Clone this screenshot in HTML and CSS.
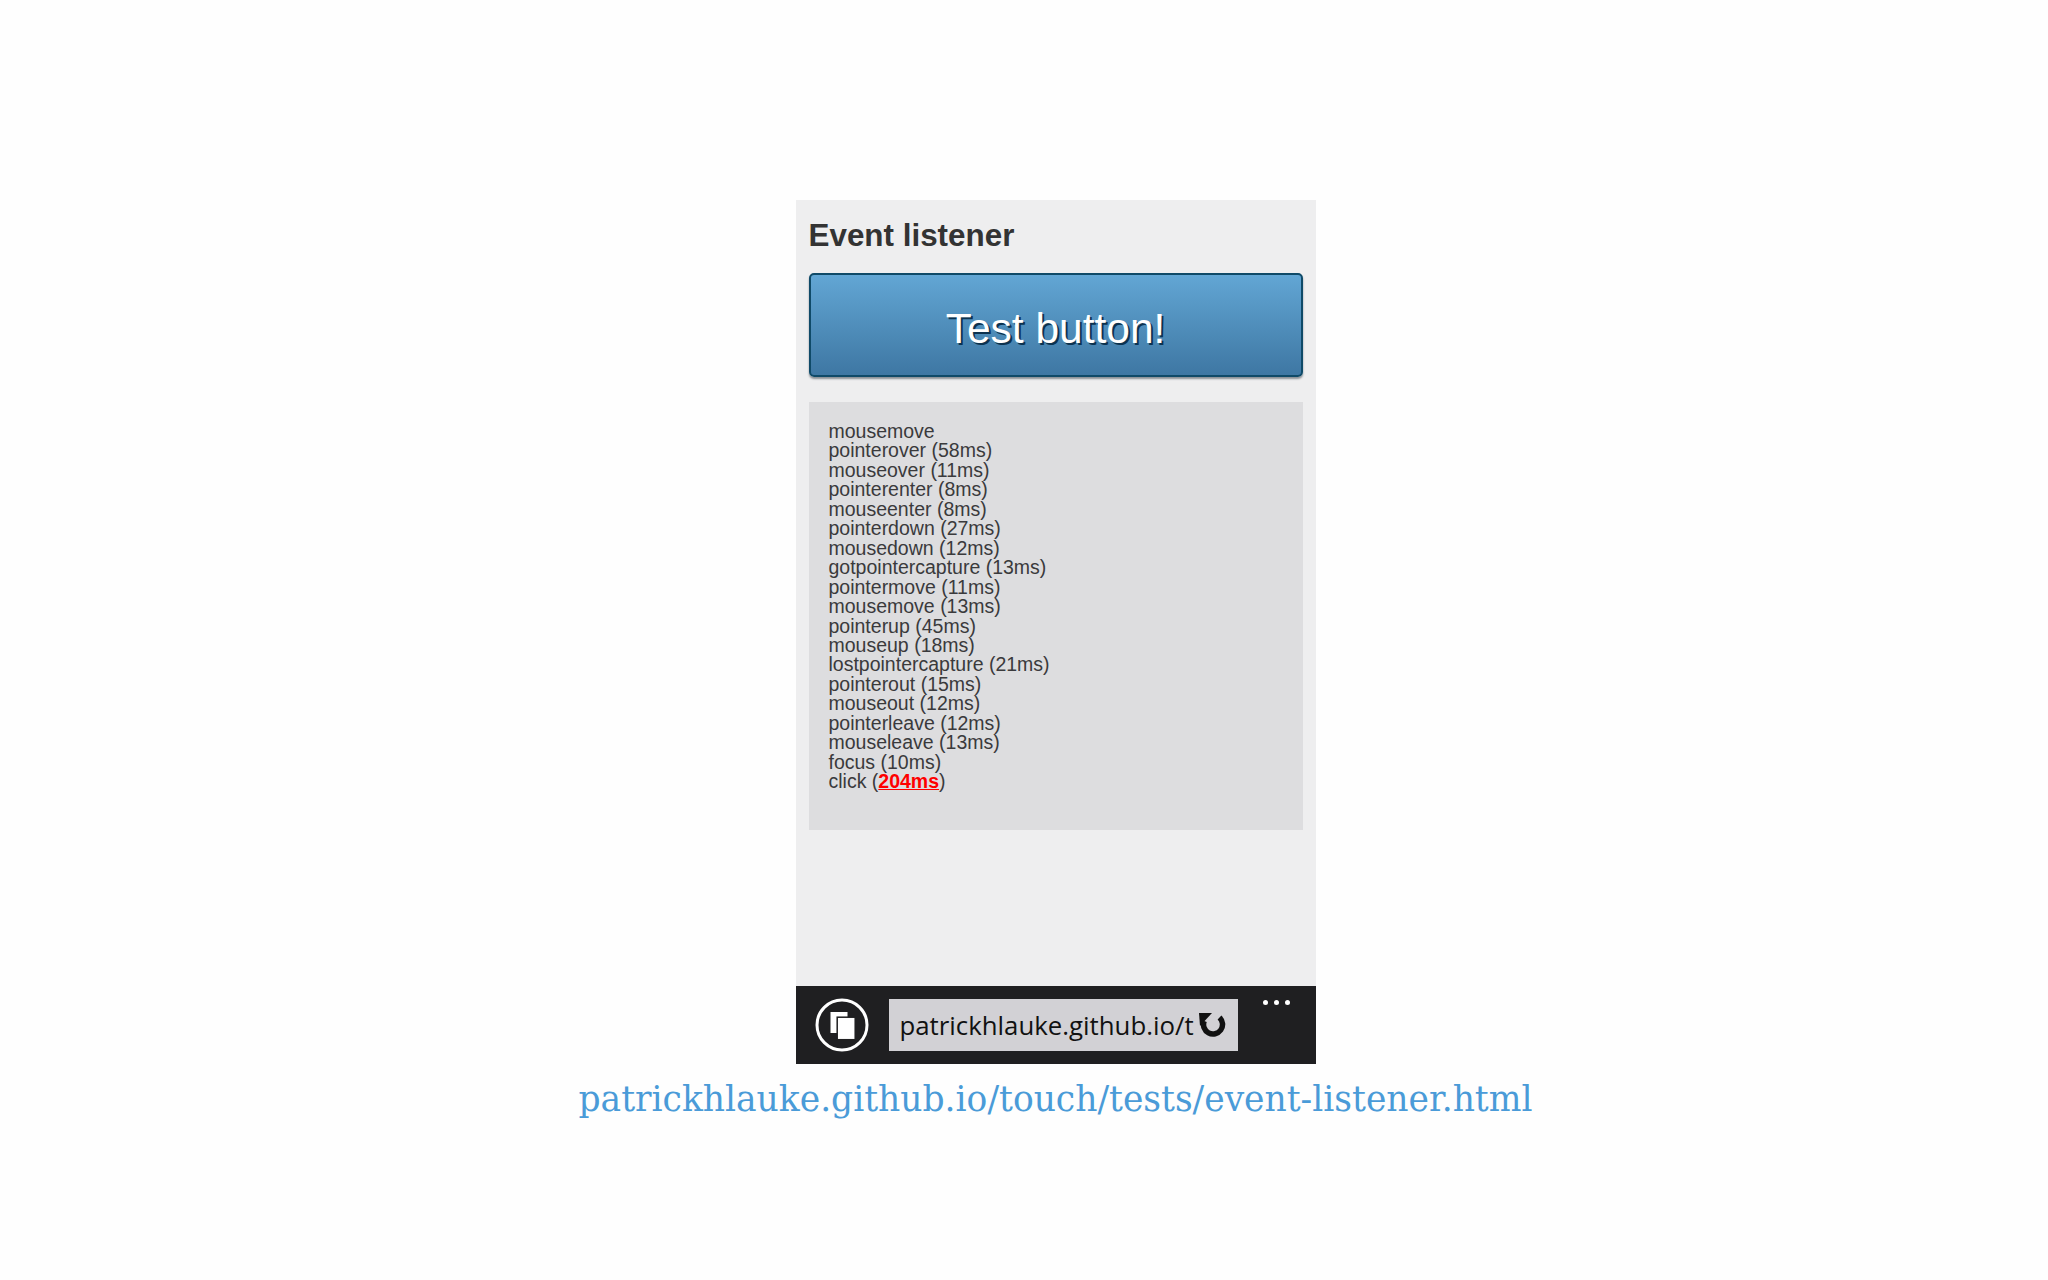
FILE: index.html
```html
<!DOCTYPE html>
<html lang="en">
<head>
    <meta charset="UTF-8">
    <title>Event listener</title>
    <link rel="stylesheet" href="styles.css">
</head>
<body>
    <main class="slide">
        <div class="phone">
            <div class="screen">
                <h1>Event listener</h1>
                <button class="test-button">Test button!</button>
                <div class="log">
                    mousemove<br>
                    pointerover (58ms)<br>
                    mouseover (11ms)<br>
                    pointerenter (8ms)<br>
                    mouseenter (8ms)<br>
                    pointerdown (27ms)<br>
                    mousedown (12ms)<br>
                    gotpointercapture (13ms)<br>
                    pointermove (11ms)<br>
                    mousemove (13ms)<br>
                    pointerup (45ms)<br>
                    mouseup (18ms)<br>
                    lostpointercapture (21ms)<br>
                    pointerout (15ms)<br>
                    mouseout (12ms)<br>
                    pointerleave (12ms)<br>
                    mouseleave (13ms)<br>
                    focus (10ms)<br>
                    click (<strong>204ms</strong>)
                </div>
            </div>
            <div class="toolbar">
                <svg class="tabs-icon" viewBox="0 0 54 54" width="54" height="54">
                    <circle cx="27" cy="27" r="25" fill="none" stroke="#fff" stroke-width="3"/>
                    <rect x="15.5" y="14" width="17" height="21" fill="#fff"/>
                    <rect x="22.2" y="19.2" width="18" height="22.5" fill="#fff" stroke="#1f1f21" stroke-width="1.5"/>
                </svg>
                <div class="address">
                    <span class="url">patrickhlauke.github.io/t</span>
                    <svg class="reload" viewBox="0 0 28 28" width="28" height="28">
                        <path d="M21.5 6.5A9.5 9.5 0 1 1 6.2 10" fill="none" stroke="#111" stroke-width="5.5"/>
                        <path d="M1 2h13L2 15z" fill="#111"/>
                    </svg>
                </div>
                <div class="dots"><i></i><i></i><i></i></div>
            </div>
        </div>
        <a class="caption" href="#">patrickhlauke.github.io/touch/tests/event-listener.html</a>
    </main>
</body>
</html>
```

FILE: styles.css
```css
body {
    margin: 0;
    background-color: #fefefe;
    font-family: "Liberation Sans", Arial, sans-serif;
}
.slide {
    display: flex;
    flex-direction: column;
    align-items: center;
    padding: 200px 0 0 63px;
}
.phone {
    width: 520px;
    display: flex;
    flex-direction: column;
}
.screen {
    height: 786px;
    box-sizing: border-box;
    padding: 17px 13px 0;
    background-color: #eeeeef;
}
h1 {
    margin: 0 0 18px;
    font-size: 31.4px;
    line-height: 38px;
    font-weight: bold;
    color: #333;
}
.test-button {
    display: block;
    width: 100%;
    height: 104px;
    padding: 7px 0 0;
    border: 2px solid #0f4a68;
    border-radius: 5px;
    background: linear-gradient(#62a6d4, #3e77a3);
    box-shadow: 0 2px 2px #8a9096;
    color: #fff;
    font-family: inherit;
    font-size: 42.5px;
    text-shadow: 2px 2px 0 #0c3350;
}
.log {
    height: 428px;
    box-sizing: border-box;
    margin-top: 25px;
    padding: 20px 19px 0 20px;
    background-color: #dddddf;
    color: #3a3a3c;
    font-size: 19.5px;
    line-height: 19.45px;
}
.log strong {
    color: #f00;
    text-decoration: underline;
}
.toolbar {
    height: 78px;
    display: flex;
    align-items: center;
    padding: 0 0 0 19px;
    background-color: #1f1f21;
}
.tabs-icon {
    flex: none;
}
.address {
    width: 349px;
    height: 52px;
    box-sizing: border-box;
    margin-left: 20px;
    padding: 0 11px;
    display: flex;
    align-items: center;
    background-color: #d2d1d5;
}
.url {
    width: 298px;
    flex: none;
    white-space: nowrap;
    font-family: "Open Sans", sans-serif;
    font-size: 25.8px;
    color: #111;
}
.reload {
    flex: none;
}
.dots {
    align-self: flex-start;
    display: flex;
    gap: 6px;
    margin: 14px 0 0 25px;
}
.dots i {
    width: 5px;
    height: 5px;
    border-radius: 50%;
    background-color: #fff;
}
.caption {
    margin-top: 12px;
    font-family: "DejaVu Serif", serif;
    font-size: 34.5px;
    line-height: 46px;
    color: #4a9bd8;
    text-decoration: none;
}
```
